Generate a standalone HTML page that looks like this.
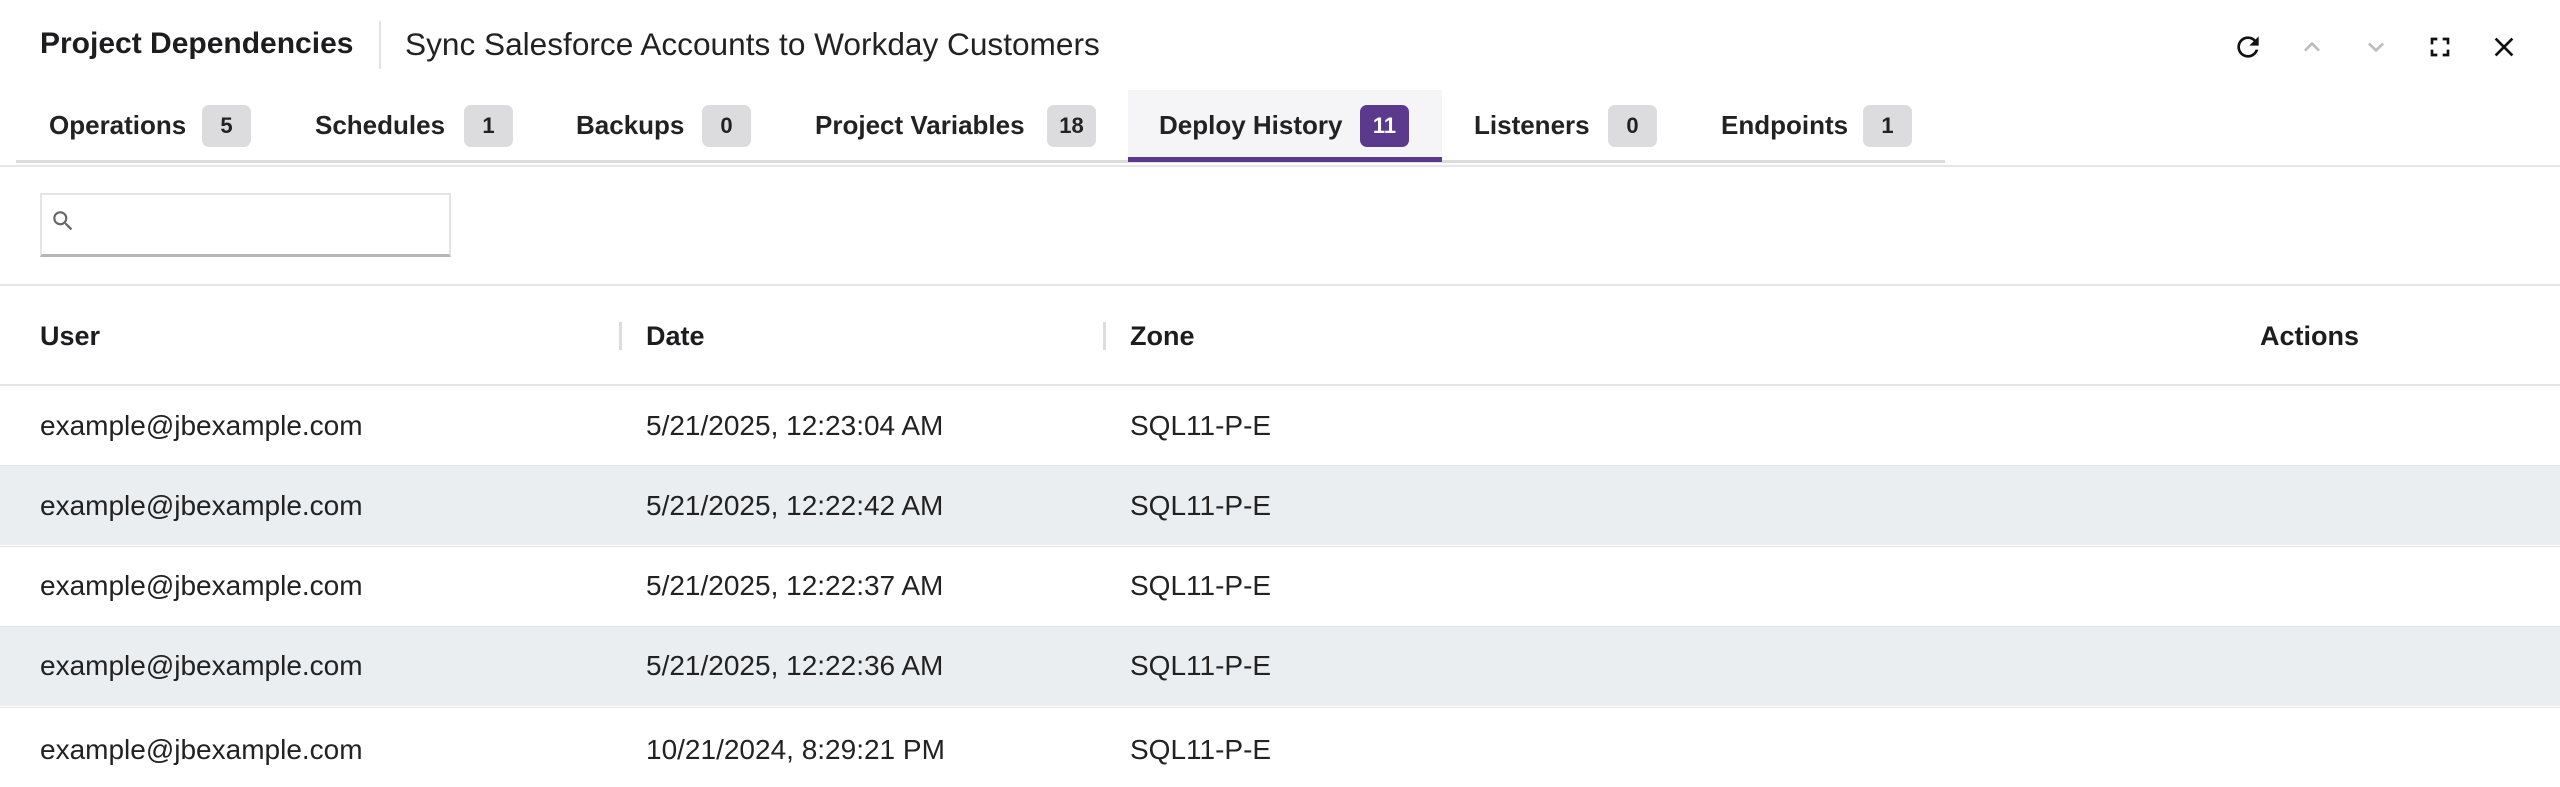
<!DOCTYPE html>
<html><head><meta charset="utf-8"><style>
*{margin:0;padding:0;box-sizing:border-box}
body{width:2560px;height:760px;overflow:hidden;background:#fff;font-family:"Liberation Sans",Arial,sans-serif;color:#1d1d1f;position:relative}
.a{position:absolute;white-space:nowrap}
.title{left:40px;top:26px;font-size:30px;font-weight:bold;line-height:36px}
.sub{left:405px;top:26px;font-size:31.6px;line-height:36px;color:#222}
.sep{left:379px;top:21px;width:2px;height:48px;background:#e2e2e2}
.tab{top:109px;font-size:26px;font-weight:bold;line-height:32px;color:#222}
.badge{top:105px;height:42px;width:49px;border-radius:7px;background:#dcdcde;font-size:22px;font-weight:bold;text-align:center;line-height:42px;color:#222}
.hd{top:321px;font-size:27px;font-weight:bold;line-height:30px}
.cell{font-size:28px;line-height:30px;color:#222}
.row{position:absolute;left:0;width:2560px;height:80px}
</style></head><body>
<div class="a title">Project Dependencies</div>
<div class="a sep"></div>
<div class="a sub">Sync Salesforce Accounts to Workday Customers</div>

<svg class="a" style="left:2232px;top:31px" width="32" height="32" viewBox="0 0 24 24"><path d="M17.65 6.35A7.96 7.96 0 0 0 12 4a8 8 0 1 0 7.730 10h-2.08A6 6 0 1 1 12 6c1.66 0 3.14.69 4.22 1.78L13 11h7V4z" fill="#111"/></svg>
<svg class="a" style="left:2296px;top:31px" width="32" height="32" viewBox="0 0 24 24"><path d="M7.41 15.41 12 10.83l4.590 4.58L18 14l-6-6-6 6z" fill="#bdbdbd"/></svg>
<svg class="a" style="left:2360px;top:31px" width="32" height="32" viewBox="0 0 24 24"><path d="M7.41 8.59 12 13.17l4.59-4.58L18 10l-6 6-6-6z" fill="#bdbdbd"/></svg>
<svg class="a" style="left:2424px;top:31px" width="32" height="32" viewBox="0 0 24 24"><path d="M7 14H5v5h5v-2H7zm-2-4h2V7h3V5H5zm12 7h-3v2h5v-5h-2zM14 5v2h3v3h2V5z" fill="#111"/></svg>
<svg class="a" style="left:2488px;top:31px" width="32" height="32" viewBox="0 0 24 24"><path d="M19 6.41 17.59 5 12 10.59 6.41 5 5 6.41 10.59 12 5 17.590 6.41 19 12 13.41 17.59 19 19 17.59 13.41 12z" fill="#111"/></svg>

<div class="a" style="left:1128px;top:90px;width:314px;height:72px;background:#f5f5f8"></div>
<div class="a" style="left:16px;top:160px;width:1929px;height:3px;background:#dcdcdc"></div>
<div class="a" style="left:1128px;top:157px;width:314px;height:5px;background:#5b3a8e"></div>
<div class="a" style="left:0;top:165px;width:2560px;height:2px;background:#e6e6e6"></div>

<div class="a tab" style="left:49px">Operations</div><div class="a badge" style="left:202px">5</div>
<div class="a tab" style="left:315px">Schedules</div><div class="a badge" style="left:464px">1</div>
<div class="a tab" style="left:576px">Backups</div><div class="a badge" style="left:702px">0</div>
<div class="a tab" style="left:815px">Project Variables</div><div class="a badge" style="left:1047px">18</div>
<div class="a tab" style="left:1159px">Deploy History</div><div class="a badge" style="left:1360px;background:#5b3a8e;color:#fff">11</div>
<div class="a tab" style="left:1474px">Listeners</div><div class="a badge" style="left:1608px">0</div>
<div class="a tab" style="left:1721px">Endpoints</div><div class="a badge" style="left:1863px">1</div>

<div class="a" style="left:40px;top:193px;width:411px;height:64px;border:2px solid #e4e4e4;border-bottom:3px solid #b5b5b5"></div>
<svg class="a" style="left:50px;top:208px" width="26" height="26" viewBox="0 0 24 24"><path d="M15.5 14h-.79l-.28-.27A6.47 6.47 0 0 0 16 9.5 6.5 6.5 0 1 0 9.5 16c1.61 0 3.09-.59 4.23-1.57l.27.28v.79l5 4.99L20.490 19zm-6 0C7.01 14 5 11.99 5 9.5S7.01 5 9.5 5 14 7.01 14 9.5 11.99 14 9.5 14" fill="#666"/></svg>

<div class="a" style="left:0;top:284px;width:2560px;height:2px;background:#e6e6e6"></div>

<div class="a hd" style="left:40px">User</div>
<div class="a" style="left:619px;top:322px;width:3px;height:28px;background:#ddd"></div>
<div class="a hd" style="left:646px">Date</div>
<div class="a" style="left:1103px;top:322px;width:3px;height:28px;background:#ddd"></div>
<div class="a hd" style="left:1130px">Zone</div>
<div class="a hd" style="left:2260px">Actions</div>
<div class="a" style="left:0;top:384px;width:2560px;height:2px;background:#e6e6e6"></div>

<div class="row" style="top:386px;background:#fff"></div>
<div class="row" style="top:465px;background:#eaeef1;border-top:1px solid #e2e5e8"></div>
<div class="row" style="top:546px;background:#fff;border-top:1px solid #e2e5e8"></div>
<div class="row" style="top:626px;background:#eaeef1;border-top:1px solid #e2e5e8"></div>
<div class="row" style="top:707px;background:#fff;border-top:1px solid #e2e5e8"></div>

<div class="a cell" style="left:40px;top:411px">example@jbexample.com</div>
<div class="a cell" style="left:646px;top:411px">5/21/2025, 12:23:04 AM</div>
<div class="a cell" style="left:1130px;top:411px">SQL11-P-E</div>
<div class="a cell" style="left:40px;top:491px">example@jbexample.com</div>
<div class="a cell" style="left:646px;top:491px">5/21/2025, 12:22:42 AM</div>
<div class="a cell" style="left:1130px;top:491px">SQL11-P-E</div>
<div class="a cell" style="left:40px;top:571px">example@jbexample.com</div>
<div class="a cell" style="left:646px;top:571px">5/21/2025, 12:22:37 AM</div>
<div class="a cell" style="left:1130px;top:571px">SQL11-P-E</div>
<div class="a cell" style="left:40px;top:651px">example@jbexample.com</div>
<div class="a cell" style="left:646px;top:651px">5/21/2025, 12:22:36 AM</div>
<div class="a cell" style="left:1130px;top:651px">SQL11-P-E</div>
<div class="a cell" style="left:40px;top:735px">example@jbexample.com</div>
<div class="a cell" style="left:646px;top:735px">10/21/2024, 8:29:21 PM</div>
<div class="a cell" style="left:1130px;top:735px">SQL11-P-E</div>
</body></html>
